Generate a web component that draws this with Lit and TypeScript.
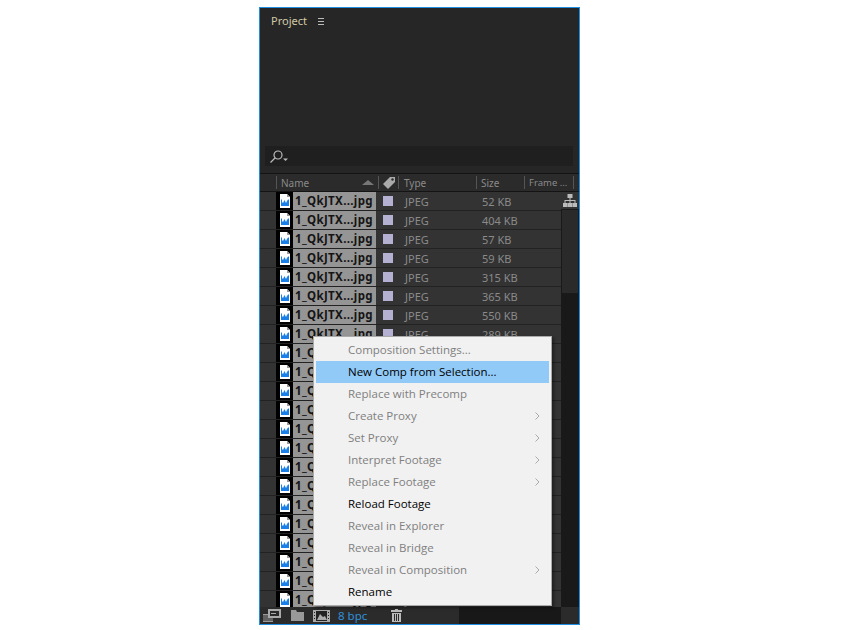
import { LitElement, html, css } from "lit";
import { customElement } from "lit/decorators.js";

const MENU: [string, boolean, boolean][] = [
  ["Composition Settings...", false, false],
  ["New Comp from Selection...", true, false],
  ["Replace with Precomp", false, false],
  ["Create Proxy", false, true],
  ["Set Proxy", false, true],
  ["Interpret Footage", false, true],
  ["Replace Footage", false, true],
  ["Reload Footage", true, false],
  ["Reveal in Explorer", false, false],
  ["Reveal in Bridge", false, false],
  ["Reveal in Composition", false, true],
  ["Rename", true, false],
];
const SIZES = ["52 KB", "404 KB", "57 KB", "59 KB", "315 KB", "365 KB", "550 KB", "289 KB"];

const fileIcon = html`<svg class="file" width="10" height="14" viewBox="0 0 10 14">
  <path d="M0 0H7L10 3V14H0Z" fill="#fff"/>
  <path d="M7 0V3H10Z" fill="#999"/>
  <path d="M1 5.500H2V8L3 9L4.500 6L6 9L7 7L8 5.500H9V12H1Z" fill="#1a80e8"/>
</svg>`;

@customElement("app-root")
export class AppRoot extends LitElement {
  static styles = css`
    :host { display: block; font-family: "Noto Sans", sans-serif; }
    .page { padding: 7px 0 0 259px; }
    .panel {
      position: relative; box-sizing: border-box; width: 321px; height: 618px;
      border: 1px solid #1f8fe0; background: #262626;
      display: flex; flex-direction: column; overflow: hidden;
    }
    .tab { height: 25px; display: flex; align-items: center; gap: 11px; padding-left: 11px;
      color: #d3c9a8; font-size: 11px; }
    .burger { width: 6px; height: 5px; margin-top: 1px; border-top: 1px solid #bbb; border-bottom: 1px solid #bbb; position: relative; }
    .burger::after { content: ""; position: absolute; left: 0; right: 0; top: 2px; height: 1px; background: #bbb; }
    .blank { height: 113px; }
    .search { height: 20px; margin: 0 6px 0 5px; background: #1f1f1f; display: flex; align-items: center; padding-left: 4px; }
    .gap { height: 7px; }
    .header { height: 19px; box-sizing: border-box; border-top: 1px solid #141414; border-bottom: 1px solid #141414;
      background: #2b2b2b; position: relative; display: flex; align-items: center; color: #8a8a8a; font-size: 10px; }
    .spacer { width: 16px; flex: none; }
    .hcell { box-sizing: border-box; height: 13px; display: flex; align-items: center; border-left: 1px solid #555; padding-left: 4px; flex: none; position: relative; white-space: nowrap; }
    .c-name { width: 102px; }
    .c-tag { width: 20px; padding-left: 3px; }
    .c-type { width: 78px; padding-left: 5px; }
    .c-size { width: 48px; }
    .c-frame { width: 50px; border-right: 1px solid #555; font-size: 9.500px; }
    .sort { position: absolute; right: 4px; top: 4px; }
    .list { flex: 1; display: flex; min-height: 0; }
    .rows { width: 301px; flex: none; overflow: hidden; }
    .row { height: 19px; box-sizing: border-box; background: #333; border-bottom: 1px solid #222; display: flex; align-items: center; color: #8a8a8a; font-size: 11px; }
    .thumb { width: 17px; height: 18px; margin-left: 16px; background: #000; display: flex; align-items: center; justify-content: center; flex: none; }
    .name { width: 83px; height: 18px; background: #959595; color: #141414; font: bold 11.500px "Noto Sans", sans-serif; letter-spacing: .35px; line-height: 18px; padding-left: 2px; box-sizing: border-box; white-space: nowrap; flex: none; }
    .swatch { width: 10px; height: 10px; background: #b4b0d2; margin-left: 7px; flex: none; }
    .type { width: 77px; margin-left: 12px; flex: none; }
    .side { width: 18px; flex: none; display: flex; flex-direction: column; background: #191919; }
    .flow { height: 17px; background: #333; display: flex; align-items: center; justify-content: center; }
    .track { height: 83px; margin: 1px 1px 0; background: #2a2a2a; }
    .footer { height: 17px; flex: none; background: #2b2b2b; display: flex; align-items: center; }
    .fblue { color: #2f8fd8; font-size: 11.500px; margin-left: 8px; width: 29px; white-space: nowrap; }
    .fleft { width: 199px; display: flex; align-items: center; padding-left: 3px; box-sizing: border-box; flex: none; height: 100%; }
    .i-folder { margin-left: 10px; }
    .i-film { margin-left: 9px; }
    .i-trash { margin-left: 24px; }
    .fill { width: 102px; height: 100%; background: #181818; flex: none; }
    .menu { position: absolute; left: 53px; top: 328px; width: 239px; height: 270px; box-sizing: border-box;
      background: #f1f1f1; border: 1px solid #aaa; padding: 2px; color: #808080;
      font: 11.500px "Open Sans", sans-serif; box-shadow: 2px 2px 3px rgba(0,0,0,.4); }
    .item { height: 22px; box-sizing: border-box; padding: 0 0 1px 32px; display: flex; align-items: center; position: relative; white-space: nowrap; }
    .on { color: #000; }
    .hl { background: #91c9f7; }
    .arrow { position: absolute; right: 9px; top: 7px; }
  `;

  render() {
    const rows = Array.from({ length: 22 }, (_, i) => html`<div class="row">
      <div class="thumb">${fileIcon}</div>
      <div class="name">1_QkJTX...jpg</div>
      <div class="swatch"></div>
      <div class="type">JPEG</div>
      <div>${SIZES[i] ?? ""}</div>
    </div>`);
    return html`<div class="page"><div class="panel">
      <div class="tab"><span>Project</span><div class="burger"></div></div>
      <div class="blank"></div>
      <div class="search">
        <svg width="22" height="14" viewBox="0 0 22 14" fill="none" stroke="#bbb" stroke-width="1.200">
          <circle cx="9" cy="6" r="4"/><path d="M6 9L1.500 13.500"/><path d="M14 9.500h5l-2.500 2.500z" fill="#bbb" stroke="none"/>
        </svg>
      </div>
      <div class="gap"></div>
      <div class="header">
        <div class="spacer"></div>
        <div class="hcell c-name">Name
          <svg class="sort" width="12" height="5" viewBox="0 0 12 5"><path d="M6 0L12 5H0Z" fill="#777"/></svg>
        </div>
        <div class="hcell c-tag">
          <svg width="14" height="14" viewBox="0 0 14 14"><path d="M1 8L8 1H13V6L6 13Z" fill="#aaa"/><circle cx="10.500" cy="3.500" r="1.200" fill="#2b2b2b"/></svg>
        </div>
        <div class="hcell c-type">Type</div>
        <div class="hcell c-size">Size</div>
        <div class="hcell c-frame">Frame ...</div>
      </div>
      <div class="list">
        <div class="rows">${rows}</div>
        <div class="side">
          <div class="flow"><svg width="14" height="13" viewBox="0 0 14 13" fill="#bbb"><path d="M4.500 0h5v4h-5zM6.500 4h1v2h5v3h-1V7h-4v2h-1V7h-4v2h-1V6h5zM0 9h4.500v4H0zM4.800 9h4.400v4H4.800zM9.500 9H14v4H9.500z"/></svg></div>
          <div class="track"></div>
        </div>
      </div>
      <div class="footer">
        <div class="fleft">
          <svg width="18" height="13" viewBox="0 0 18 13"><path d="M0 5h10v8H0z" fill="#999"/><path d="M0 7h10M0 9h10M0 11h10" stroke="#2b2b2b"/><path d="M5 0h13v9H5z" fill="#aaa"/><path d="M7 2h9v5H7z" fill="#2b2b2b"/><path d="M8 4h5v1H8z" fill="#aaa"/></svg>
          <svg class="i-folder" width="13" height="11" viewBox="0 0 13 11" fill="#999"><path d="M0 0h5l1 2h7v9H0z"/></svg>
          <svg class="i-film" width="17" height="12" viewBox="0 0 17 12"><path d="M0 0h17v12H0z" fill="#aaa"/><path d="M3 1h11v10H3z" fill="#222"/><path d="M4 10l3-6 3 3 2-1 2 4z" fill="#aaa"/><path d="M1 2h1v1H1zM1 5h1v1H1zM1 8h1v1H1zM15 2h1v1h-1zM15 5h1v1h-1zM15 8h1v1h-1z" fill="#222"/></svg>
          <span class="fblue">8 bpc</span>
          <svg class="i-trash" width="11" height="13" viewBox="0 0 11 13" fill="#bbb"><path d="M4 0h3v1h4v2H0V1h4zM1 4h9v9H1zM3 5v7h1V5zM5 5v7h1V5zM7 5v7h1V5z" fill-rule="evenodd"/></svg>
        </div>
        <div class="fill"></div>
      </div>
      <div class="menu">
        ${MENU.map(([t, on, sub], i) => html`<div class="item ${on ? "on" : ""} ${i === 1 ? "hl" : ""}">${t}
          ${sub ? html`<svg class="arrow" width="5" height="8" viewBox="0 0 5 8" fill="none" stroke="#aaa"><path d="M.5 .5L4 4L.5 7.500"/></svg>` : ""}
        </div>`)}
      </div>
    </div></div>`;
  }
}
